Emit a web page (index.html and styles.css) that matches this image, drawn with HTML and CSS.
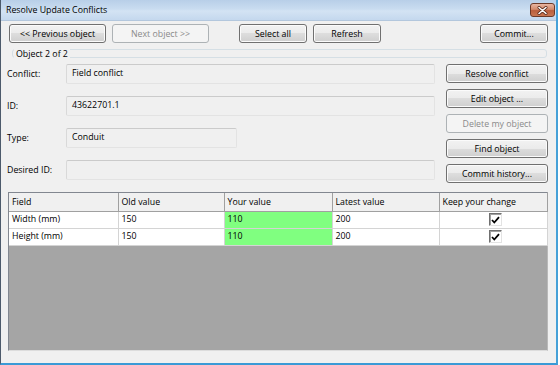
FILE: index.html
```html
<!DOCTYPE html>
<html>
<head>
<meta charset="utf-8">
<link rel="stylesheet" href="styles.css">
</head>
<body>
<div class="window">
  <div class="titlebar">
    <span class="title">Resolve Update Conflicts</span>
    <div class="close">
      <svg width="11" height="9" viewBox="0 0 11 9"><path d="M2 1.5 L9 7.5 M9 1.5 L2 7.5" stroke="#5a2a1a" stroke-width="3" stroke-linecap="round"/><path d="M2 1.5 L9 7.5 M9 1.5 L2 7.5" stroke="#fff" stroke-width="1.6" stroke-linecap="round"/></svg>
    </div>
  </div>
  <div class="content">
    <div class="toolbar">
      <button class="btn w97">&lt;&lt; Previous object</button>
      <button class="btn w97 gap6" disabled>Next object &gt;&gt;</button>
      <button class="btn w68 gap30">Select all</button>
      <button class="btn w68 gap6">Refresh</button>
      <button class="btn w68 push">Commit...</button>
    </div>
    <div class="group">
      <span class="legend">Object 2 of 2</span>
    </div>
    <div class="main">
      <div class="fields">
        <div class="row"><span class="label">Conflict:</span><div class="field">Field conflict</div></div>
        <div class="row"><span class="label">ID:</span><div class="field">43622701.1</div></div>
        <div class="row"><span class="label">Type:</span><div class="field short">Conduit</div></div>
        <div class="row"><span class="label">Desired ID:</span><div class="field"></div></div>
      </div>
      <div class="actions">
        <button class="btn">Resolve conflict</button>
        <button class="btn">Edit object ...</button>
        <button class="btn" disabled>Delete my object</button>
        <button class="btn">Find object</button>
        <button class="btn">Commit history...</button>
      </div>
    </div>
    <div class="grid">
      <table>
        <colgroup>
          <col class="c1"><col class="c2"><col class="c3"><col class="c4"><col class="c5">
        </colgroup>
        <thead>
          <tr><th>Field</th><th>Old value</th><th>Your value</th><th>Latest value</th><th>Keep your change</th></tr>
        </thead>
        <tbody>
          <tr><td>Width (mm)</td><td>150</td><td class="mine">110</td><td>200</td><td class="keep"><span class="check"><svg width="9" height="8" viewBox="0 0 9 8"><path d="M1 4 L3.3 6.5 L8 1.2" fill="none" stroke="#000" stroke-width="1.8"/></svg></span></td></tr>
          <tr><td>Height (mm)</td><td>150</td><td class="mine">110</td><td>200</td><td class="keep"><span class="check"><svg width="9" height="8" viewBox="0 0 9 8"><path d="M1 4 L3.3 6.5 L8 1.2" fill="none" stroke="#000" stroke-width="1.8"/></svg></span></td></tr>
        </tbody>
      </table>
    </div>
  </div>
</div>
</body>
</html>
```

FILE: styles.css
```css
* { box-sizing: border-box; }
html, body { margin: 0; padding: 0; }
body {
  width: 560px;
  height: 365px;
  overflow: hidden;
  background: #ffffff;
  font-family: "Open Sans", "Noto Sans", sans-serif;
  font-size: 8.8px;
  color: #000;
}
.window {
  width: 558px;
  height: 365px;
  display: flex;
  flex-direction: column;
  background: #f0f0f0;
  border-left: 1px solid #4c5a6b;
  border-right: 2px solid #46a1d8;
  border-bottom: 2px solid #3a9ad6;
}
.titlebar {
  height: 21px;
  flex: none;
  display: flex;
  align-items: center;
  padding-left: 5px;
  padding-right: 1px;
  background: linear-gradient(#b8cfe8 0%, #c9dcf0 45%, #d3e3f3 55%, #c4d8ee 100%);
  border-bottom: 1px solid #b3c7dd;
}
.title { color: #000; }
.close {
  margin-left: auto;
  width: 25px;
  height: 14px;
  border: 1px solid #6d3a28;
  border-radius: 3px;
  background: linear-gradient(#e8b6a2 0%, #d28a6c 45%, #bb5f3d 55%, #c97752 100%);
  display: flex;
  align-items: center;
  justify-content: center;
}
.content {
  flex: 1;
  display: flex;
  flex-direction: column;
  padding: 3px 8px 12px 8px;
  min-height: 0;
}
.toolbar {
  display: flex;
  height: 19px;
  flex: none;
}
.btn {
  height: 19px;
  padding: 0;
  font: inherit;
  color: #000;
  border: 1px solid #707070;
  border-radius: 3px;
  background: linear-gradient(#f2f2f2 0%, #ebebeb 50%, #dddddd 50%, #cfcfcf 100%);
  box-shadow: inset 0 0 0 1px #fbfbfb;
  text-align: center;
  line-height: 16px;
}
.btn:disabled {
  border-color: #adb2b5;
  background: #f4f4f4;
  box-shadow: none;
  color: #8a8a8a;
}
.w97 { width: 97px; }
.w68 { width: 68px; }
.gap6 { margin-left: 6px; }
.gap30 { margin-left: 30px; }
.push { margin-left: auto; }
.group {
  flex: none;
  height: 9px;
  margin: 6px 1px 0 3px;
  border: 1px solid #d5dfe5;
  border-radius: 3px;
  display: flex;
  align-items: flex-start;
}
.legend {
  margin: -1px 0 0 1px;
  padding: 0 2px;
  background: #f0f0f0;
  line-height: 10px;
}
.main {
  flex: none;
  display: flex;
  margin: 6px 0 0 -2px;
}
.fields {
  display: flex;
  flex-direction: column;
  gap: 12px;
}
.row {
  display: flex;
  align-items: center;
  height: 20px;
}
.label {
  width: 59px;
  flex: none;
}
.field {
  width: 369px;
  height: 20px;
  padding: 3px 0 0 5px;
  line-height: 11px;
  border: 1px solid;
  border-color: #cbcbcb #e3e3e3 #e3e3e3 #d9d9d9;
  border-radius: 2px;
  background: #f0f0f0;
}
.field.short { width: 171px; }
.actions {
  margin-left: 11px;
  width: 102px;
  display: flex;
  flex-direction: column;
  gap: 6px;
}
.actions .btn { width: 102px; }
.grid {
  flex: 1;
  margin: 9px 0 0 -1px;
  border: 1px solid #828790;
  border-right-color: #b9b9b9;
  border-bottom-color: #dcdcdc;
  background: #a5a5a5;
  min-height: 0;
}
table {
  border-collapse: collapse;
  table-layout: fixed;
  width: 538px;
}
.c1 { width: 109px; }
.c2 { width: 106px; }
.c3 { width: 108px; }
.c4 { width: 107px; }
.c5 { width: 108px; }
th {
  height: 18px;
  font-weight: normal;
  text-align: left;
  padding: 0 0 0 3px;
  background: #f0f0f0;
  border-right: 1px solid #a0a0a0;
  border-bottom: 1px solid #a0a0a0;
  line-height: 16px;
}
td {
  height: 17px;
  padding: 0 0 0 3px;
  background: #fff;
  border-right: 1px solid #d4d4d4;
  border-bottom: 1px solid #d4d4d4;
  line-height: 15px;
}
td.mine { background: #80ff80; }
td.keep {
  padding: 0;
  text-align: center;
}
.check {
  display: inline-flex;
  width: 13px;
  height: 13px;
  margin-left: 4px;
  vertical-align: middle;
  align-items: center;
  justify-content: center;
  background: #fff;
  border: 1px solid;
  border-color: #707070 #e3e3e3 #e3e3e3 #707070;
  box-shadow: inset 1px 1px 0 #a0a0a0;
}
```
